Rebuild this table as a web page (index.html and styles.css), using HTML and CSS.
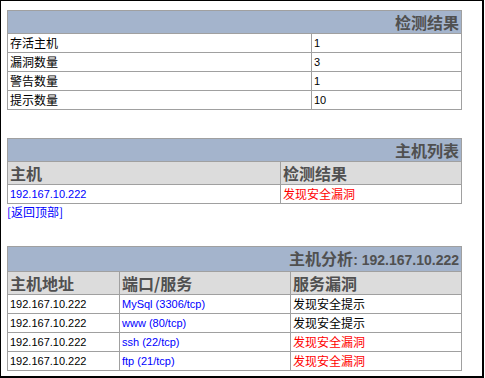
FILE: index.html
```html
<!DOCTYPE html>
<html lang="zh-CN">
<head>
<meta charset="utf-8">
<title>检测报告</title>
<link rel="stylesheet" href="styles.css">
</head>
<body>
<div class="frame">
  <table class="t t1">
    <colgroup><col class="w304"><col></colgroup>
    <tr><th colspan="2" class="title">检测结果</th></tr>
    <tr><td>存活主机</td><td class="en">1</td></tr>
    <tr><td>漏洞数量</td><td class="en">3</td></tr>
    <tr><td>警告数量</td><td class="en">1</td></tr>
    <tr><td>提示数量</td><td class="en">10</td></tr>
  </table>

  <table class="t t2">
    <colgroup><col class="w273"><col></colgroup>
    <tr><th colspan="2" class="title">主机列表</th></tr>
    <tr><th class="col">主机</th><th class="col">检测结果</th></tr>
    <tr><td class="en"><a href="#">192.167.10.222</a></td><td class="red">发现安全漏洞</td></tr>
  </table>
  <a class="top" href="#">[返回顶部]</a>

  <table class="t t3">
    <colgroup><col class="w112"><col class="w171"><col></colgroup>
    <tr><th colspan="3" class="title">主机分析<span class="en">: 192.167.10.222</span></th></tr>
    <tr><th class="col">主机地址</th><th class="col">端口/服务</th><th class="col">服务漏洞</th></tr>
    <tr><td class="en">192.167.10.222</td><td class="en"><a href="#">MySql (3306/tcp)</a></td><td>发现安全提示</td></tr>
    <tr><td class="en">192.167.10.222</td><td class="en"><a href="#">www (80/tcp)</a></td><td>发现安全提示</td></tr>
    <tr><td class="en">192.167.10.222</td><td class="en"><a href="#">ssh (22/tcp)</a></td><td class="red">发现安全漏洞</td></tr>
    <tr><td class="en">192.167.10.222</td><td class="en"><a href="#">ftp (21/tcp)</a></td><td class="red">发现安全漏洞</td></tr>
  </table>
</div>
</body>
</html>
```
FILE: styles.css
```css
html, body {
  margin: 0;
  padding: 0;
  background: #ffffff;
}

.frame {
  box-sizing: border-box;
  width: 484px;
  height: 378px;
  border-style: solid;
  border-color: #000000;
  border-width: 1px 2px 2px 1px;
  padding: 9px 0 0 6px;
  display: flex;
  flex-direction: column;
  align-items: flex-start;
}

.t {
  border-collapse: collapse;
  table-layout: fixed;
  width: 455px;
}

.w304 { width: 304px; }
.w273 { width: 273px; }
.w112 { width: 112px; }
.w171 { width: 171px; }

.t1 { margin-bottom: 28px; }

td, th {
  border: 1px solid #a0a0a0;
  padding: 0 2px;
  white-space: nowrap;
  overflow: hidden;
}

td {
  font-family: "Noto Sans CJK SC", "Liberation Sans", sans-serif;
  font-size: 12px;
  line-height: 18px;
  color: #000000;
}

td.en {
  font-family: "Liberation Sans", "Noto Sans CJK SC", sans-serif;
  font-size: 11px;
}

td.red { color: #ff0000; }

a { color: #0000ff; text-decoration: none; }

th {
  font-family: "Noto Sans CJK SC", "Liberation Sans", sans-serif;
  font-size: 16px;
  font-weight: bold;
  line-height: 22px;
  color: #505050;
}

th.title {
  background: #a4b4cc;
  text-align: right;
}

th.title .en {
  font-family: "Liberation Sans", sans-serif;
  font-size: 14px;
}

th.col {
  background: #dcdcdc;
  text-align: left;
}

.top {
  display: block;
  font-family: "Noto Sans CJK SC", "Liberation Sans", sans-serif;
  font-size: 12px;
  line-height: 16px;
  margin-bottom: 26px;
}
```
